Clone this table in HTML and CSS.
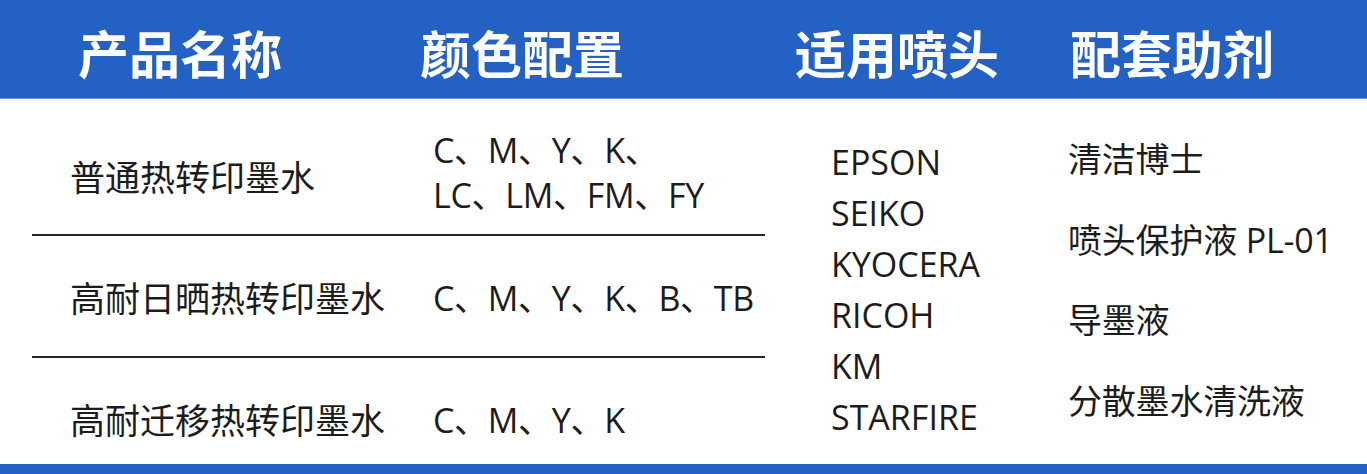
FILE: index.html
```html
<!DOCTYPE html>
<html lang="zh-CN">
<head>
<meta charset="utf-8">
<title>产品配置表</title>
<link rel="stylesheet" href="styles.css">
</head>
<body>
<div class="page">
  <div class="head">
    <div class="h h1">产品名称</div>
    <div class="h h2">颜色配置</div>
    <div class="h h3">适用喷头</div>
    <div class="h h4">配套助剂</div>
  </div>
  <div class="body">
    <div class="left">
      <div class="row r1">
        <div class="name">普通热转印墨水</div>
        <div class="colors">C、M、Y、K、<br>LC、LM、FM、FY</div>
      </div>
      <div class="row r2">
        <div class="name">高耐日晒热转印墨水</div>
        <div class="colors">C、M、Y、K、B、TB</div>
      </div>
      <div class="row r3">
        <div class="name">高耐迁移热转印墨水</div>
        <div class="colors">C、M、Y、K</div>
      </div>
    </div>
    <div class="heads">
      <div>EPSON</div>
      <div>SEIKO</div>
      <div>KYOCERA</div>
      <div>RICOH</div>
      <div>KM</div>
      <div>STARFIRE</div>
    </div>
    <div class="aux">
      <div>清洁博士</div>
      <div>喷头保护液 PL-01</div>
      <div>导墨液</div>
      <div>分散墨水清洗液</div>
    </div>
  </div>
  <div class="foot"></div>
</div>
</body>
</html>
```

FILE: styles.css
```css
html, body {
  margin: 0;
  padding: 0;
  background: #ffffff;
}
.page {
  width: 1367px;
  height: 474px;
  overflow: hidden;
  display: flex;
  flex-direction: column;
  font-family: "Open Sans", "Noto Sans CJK SC", sans-serif;
  color: #1c1c1c;
}
.head {
  background: #2461c4;
  border-bottom: 1px solid #6f98dc;
  display: flex;
  align-items: center;
  padding-left: 78px;
  box-sizing: border-box;
  height: 99px;
}
.h {
  font-family: "Noto Sans CJK SC", sans-serif;
  font-weight: 700;
  font-size: 51px;
  line-height: 60px;
  color: #ffffff;
  margin-top: 6px;
}
.h1 { width: 342px; }
.h2 { width: 375px; }
.h3 { width: 275px; }
.body {
  flex: 1;
  display: flex;
  padding-left: 32px;
  font-size: 34px;
}
.left {
  width: 733px;
  display: flex;
  flex-direction: column;
}
.row {
  display: flex;
  align-items: center;
  box-sizing: border-box;
}
.r1 { height: 137px; border-bottom: 2px solid #262626; padding-top: 12px; }
.r2 { height: 122px; border-bottom: 2px solid #262626; padding-top: 4px; }
.r3 { flex: 1; padding-top: 18px; }
.name {
  width: 401px;
  padding-left: 38px;
  box-sizing: border-box;
  line-height: 45px;
  font-size: 35px;
}
.r1 .name { margin-top: 10px; }
.colors {
  line-height: 45px;
  letter-spacing: -0.3px;
}
.heads {
  width: 237px;
  margin-left: 66px;
  padding-top: 38px;
  line-height: 51px;
}
.aux {
  padding-top: 20px;
  line-height: 80.6px;
  font-size: 34px;
  letter-spacing: -0.2px;
}
.foot {
  height: 10px;
  background: #2461c4;
}
```
